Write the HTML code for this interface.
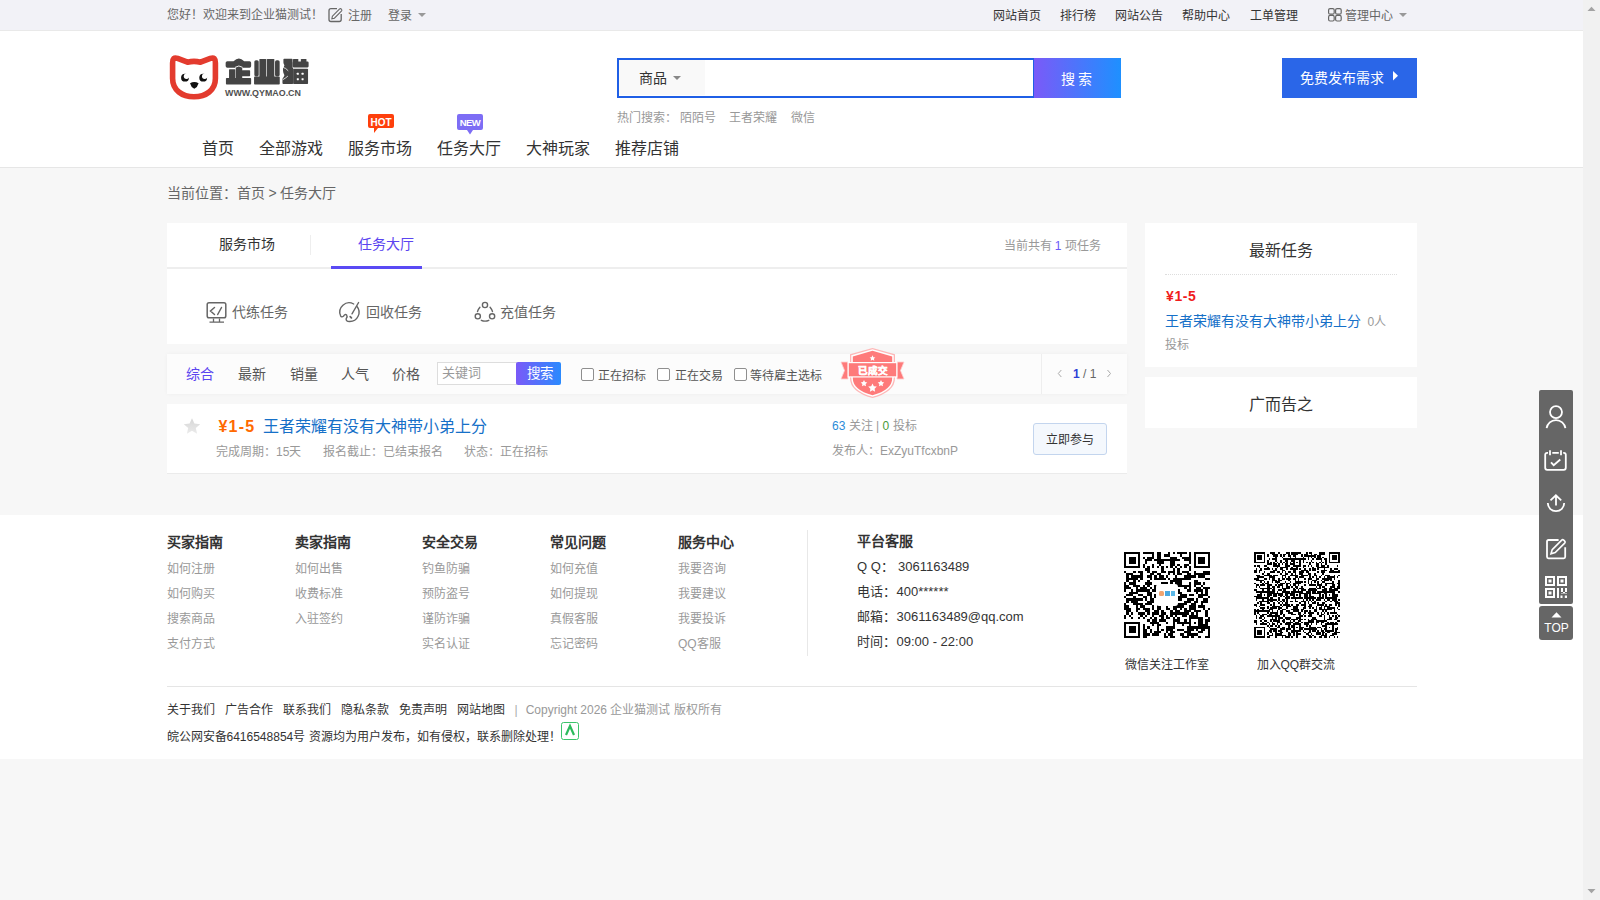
<!DOCTYPE html>
<html lang="zh-CN"><head><meta charset="utf-8"><title>任务大厅</title>
<style>
*{margin:0;padding:0;box-sizing:border-box}
html,body{width:1600px;height:900px;overflow:hidden}
body{position:relative;background:#f7f7f7;font-family:"Liberation Sans",sans-serif;color:#333}
.a{position:absolute;white-space:nowrap;line-height:20px}
.box{position:absolute}
svg{position:absolute;overflow:visible}
</style></head><body>
<div class="box" style="left:0;top:0;width:1583px;height:31px;background:#f2f2f7;border-bottom:1px solid #e9e9e9"></div>
<div class="a" style="left:166.5px;top:5px;font-size:12px;color:#666;">您好！欢迎来到企业猫测试！</div>
<svg style="left:325px;top:3px" width="20" height="22" viewBox="0 0 20 22" fill="none" stroke="#666" stroke-width="1.3"><path d="M12 5.7H6Q4 5.7 4 7.7V16.5Q4 18.5 6 18.5H14.2Q16.2 18.5 16.2 16.5V11"/><path d="M6.9 15.7L7.4 13.2L14.4 6.2Q15.4 5.2 16.4 6.2Q17.4 7.2 16.4 8.2L9.4 15.2Z" stroke-width="1.1"/></svg>
<div class="a" style="left:347.5px;top:5.5px;font-size:12px;color:#666;">注册</div>
<div class="a" style="left:388px;top:5.5px;font-size:12px;color:#666;">登录</div>
<svg style="left:418px;top:13px" width="8" height="4" viewBox="0 0 8 4"><path d="M0 0H8L4 4Z" fill="#999"/></svg>
<div class="a" style="left:993px;top:5.5px;font-size:12px;color:#333;">网站首页</div>
<div class="a" style="left:1060px;top:5.5px;font-size:12px;color:#333;">排行榜</div>
<div class="a" style="left:1115px;top:5.5px;font-size:12px;color:#333;">网站公告</div>
<div class="a" style="left:1182px;top:5.5px;font-size:12px;color:#333;">帮助中心</div>
<div class="a" style="left:1250px;top:5.5px;font-size:12px;color:#333;">工单管理</div>
<svg style="left:1324px;top:3px" width="22" height="22" viewBox="0 0 22 22" fill="none" stroke="#666" stroke-width="1.2"><rect x="4.6" y="5.6" width="5.6" height="5.6" rx="1.5"/><rect x="11.6" y="5.6" width="5.6" height="5.6" rx="1.5"/><rect x="4.6" y="12.4" width="5.6" height="5.6" rx="1.5"/><rect x="11.6" y="12.4" width="5.6" height="5.6" rx="1.5"/></svg>
<div class="a" style="left:1345px;top:5.5px;font-size:12px;color:#666;">管理中心</div>
<svg style="left:1399px;top:13px" width="8" height="4" viewBox="0 0 8 4"><path d="M0 0H8L4 4Z" fill="#999"/></svg>
<div class="box" style="left:0;top:31px;width:1583px;height:137px;background:#fff;border-bottom:1px solid #e6e6e6"></div>
<svg style="left:0;top:0" width="1" height="1" viewBox="0 0 1 1">
<path d="M172.6 63Q172.4 56.6 177.6 58.4L187.5 62.2Q194 60.6 200.5 62.2L210.4 58.4Q215.6 56.6 215.4 63V78.5C215.4 90 206 96.8 194 96.8C182 96.8 172.6 90 172.6 78.5Z" fill="none" stroke="#e33b2e" stroke-width="5.6" stroke-linejoin="round"/>
<circle cx="185" cy="77.7" r="3.9" fill="#111"/><circle cx="186.5" cy="76.2" r="2.7" fill="#fff"/>
<circle cx="203.2" cy="77.7" r="3.9" fill="#111"/><circle cx="204.7" cy="76.2" r="2.7" fill="#fff"/>
<path d="M190 83.3Q194.3 80.6 198.6 83.3Q197.6 87.3 194.3 88.8Q191 87.3 190 83.3Z" fill="#111"/>
<g transform="translate(222 54) scale(0.05624)" fill="#444">
<path d="M65 155Q65 128 95 128H205Q255 78 300 78Q345 78 395 128H490Q518 128 518 155V215Q518 243 490 243H95Q65 243 65 215Z"/>
<rect x="245" y="225" width="115" height="215" rx="10"/>
<rect x="125" y="272" width="112" height="170" rx="10"/>
<rect x="350" y="290" width="150" height="105" rx="12"/>
<rect x="70" y="425" width="448" height="117" rx="14"/>
<path d="M232 238Q300 188 368 238" fill="none" stroke="#fff" stroke-width="16"/>
<rect x="575" y="110" width="78" height="288" rx="30"/>
<rect x="665" y="88" width="122" height="335" rx="10"/>
<rect x="798" y="88" width="132" height="335" rx="10"/>
<rect x="943" y="110" width="82" height="288" rx="30"/>
<rect x="570" y="402" width="457" height="140" rx="14"/>
<path d="M1092 100Q1092 86 1106 86H1240Q1254 86 1254 100V240Q1268 250 1266 262V515Q1266 532 1250 532H1090Q1075 532 1075 515V440Q1100 410 1110 380Q1085 330 1085 300V250Q1100 235 1110 200Q1092 170 1092 150Z"/>
<path d="M1082 238Q1135 245 1178 300M1080 458Q1130 430 1172 392" fill="none" stroke="#fff" stroke-width="14"/>
<rect x="1262" y="88" width="95" height="60" rx="10"/>
<rect x="1402" y="88" width="100" height="60" rx="10"/>
<rect x="1255" y="135" width="285" height="105" rx="20"/>
<rect x="1265" y="262" width="265" height="270" rx="12"/>
<g fill="#fff"><rect x="1330" y="335" width="36" height="36" rx="6"/><rect x="1415" y="335" width="36" height="36" rx="6"/><rect x="1330" y="430" width="36" height="36" rx="6"/><rect x="1415" y="430" width="36" height="36" rx="6"/></g>
</g>
</svg>
<div class="a" style="left:225px;top:86px;font-size:8.9px;line-height:14px;font-weight:bold;color:#505050;letter-spacing:0px">WWW.QYMAO.CN</div>
<div class="box" style="left:617px;top:58px;width:418px;height:40px;border:2px solid #1f5fe6;background:#fff"></div>
<div class="box" style="left:619px;top:60px;width:86px;height:35px;background:#f9f9f9"></div>
<div class="a" style="left:638.5px;top:68px;font-size:14px;color:#333;">商品</div>
<svg style="left:673px;top:76px" width="8" height="4" viewBox="0 0 8 4"><path d="M0 0H8L4 4Z" fill="#888"/></svg>
<div class="box" style="left:1034px;top:58px;width:87px;height:40px;background:linear-gradient(90deg,#7a5af8,#1e90ff)"></div>
<div class="a" style="left:1060.5px;top:69px;font-size:14px;color:#fff;">搜&nbsp;索</div>
<div class="a" style="left:617px;top:107.5px;font-size:12px;color:#999;">热门搜索：</div>
<div class="a" style="left:680px;top:107.5px;font-size:12px;color:#999;">陌陌号</div>
<div class="a" style="left:729px;top:107.5px;font-size:12px;color:#999;">王者荣耀</div>
<div class="a" style="left:791px;top:107.5px;font-size:12px;color:#999;">微信</div>
<div class="box" style="left:1282px;top:58px;width:135px;height:40px;background:#2a66e8"></div>
<div class="a" style="left:1299.5px;top:68px;font-size:14px;color:#fff;">免费发布需求</div>
<svg style="left:1393px;top:71px" width="6" height="10" viewBox="0 0 6 10"><path d="M0 0L5 4.75L0 9.5Z" fill="#fff"/></svg>
<div class="a" style="left:201.5px;top:139px;font-size:16px;color:#333;">首页</div>
<div class="a" style="left:258.5px;top:139px;font-size:16px;color:#333;">全部游戏</div>
<div class="a" style="left:347.5px;top:139px;font-size:16px;color:#333;">服务市场</div>
<div class="a" style="left:436.5px;top:139px;font-size:16px;color:#333;">任务大厅</div>
<div class="a" style="left:525.5px;top:139px;font-size:16px;color:#333;">大神玩家</div>
<div class="a" style="left:614.5px;top:139px;font-size:16px;color:#333;">推荐店铺</div>
<svg style="left:368px;top:114px" width="26" height="20" viewBox="0 0 26 20"><path d="M2 0H24Q26 0 26 2V12Q26 14 24 14H10L6 19L6 14H2Q0 14 0 12V2Q0 0 2 0Z" fill="#fe3f0c"/></svg>
<div class="a" style="left:368px;top:115.5px;width:26px;text-align:center;font-size:10px;line-height:14px;font-weight:bold;color:#fff">HOT</div>
<svg style="left:457px;top:114px" width="26" height="21" viewBox="0 0 26 21"><path d="M2 0H24Q26 0 26 2V14Q26 16 24 16H16L13 20.5L10 16H2Q0 16 0 14V2Q0 0 2 0Z" fill="#7d6df5"/></svg>
<div class="a" style="left:457px;top:116px;width:26px;text-align:center;font-size:9.5px;line-height:14px;font-weight:bold;color:#fff;letter-spacing:-0.5px">NEW</div>
<div class="a" style="left:166.5px;top:183px;font-size:14px;color:#666;">当前位置：首页 &gt; 任务大厅</div>
<div class="box" style="left:167px;top:223px;width:960px;height:121px;background:#fff"></div>
<div class="box" style="left:167px;top:267px;width:960px;height:2px;background:#eee"></div>
<div class="a" style="left:219px;top:234px;font-size:14px;color:#333;">服务市场</div>
<div class="box" style="left:310px;top:235px;width:1px;height:20px;background:#eee"></div>
<div class="a" style="left:357.5px;top:234px;font-size:14px;color:#5b45f0;">任务大厅</div>
<div class="box" style="left:331px;top:266px;width:91px;height:3px;background:#5a4af4"></div>
<div class="a" style="left:1003.5px;top:235.5px;font-size:12px;color:#999">当前共有 <span style="color:#6a5af9">1</span> 项任务</div>
<svg style="left:202px;top:298px" width="30" height="28" viewBox="0 0 30 28" fill="none" stroke="#666" stroke-width="1.5"><rect x="5.2" y="4.8" width="18.6" height="15" rx="1.8"/><path d="M11.5 20.6V24M17.5 20.6V24M7.5 24.2H22" stroke-width="1.3"/><path d="M12.5 9.5L8.5 13L12.5 16.5M19.5 9.5L15.7 16.5" stroke-linecap="round"/></svg>
<div class="a" style="left:231.5px;top:302px;font-size:14px;color:#666;">代练任务</div>
<svg style="left:335px;top:298px" width="30" height="28" viewBox="0 0 30 28" fill="none" stroke="#666" stroke-width="1.4" stroke-linecap="round"><path d="M18.7 6A9.3 9.3 0 0 0 5.6 17.8Q6.6 19.6 8.4 18.3Q10 15.6 11.6 17Q12.7 18.4 11.2 20.6Q10.6 23.4 14.5 23.5A9.3 9.3 0 0 0 21.8 8.2"/><path d="M23.6 4.5L17 15.8"/><path d="M15.2 18.6L16.4 19.8" stroke-width="1.8"/></svg>
<div class="a" style="left:365.5px;top:302px;font-size:14px;color:#666;">回收任务</div>
<svg style="left:470px;top:298px" width="30" height="28" viewBox="0 0 30 28" fill="none" stroke="#666" stroke-width="1.4" stroke-linecap="round"><circle cx="15" cy="7" r="2.6"/><circle cx="7.8" cy="18.3" r="2.6"/><circle cx="22.1" cy="18.3" r="2.6"/><path d="M9.9 9.2Q8 11.5 7.5 13.5M20.1 9.2Q22 11.5 22.5 13.5M11.3 22.3Q15 24 18.8 22.3"/></svg>
<div class="a" style="left:499.5px;top:302px;font-size:14px;color:#666;">充值任务</div>
<div class="box" style="left:167px;top:354px;width:960px;height:40px;background:#fcfcfc;box-shadow:0 0 4px rgba(0,0,0,0.04)"></div>
<div class="a" style="left:186px;top:364px;font-size:14px;color:#5b45f0;">综合</div>
<div class="a" style="left:238px;top:364px;font-size:14px;color:#555;">最新</div>
<div class="a" style="left:289.5px;top:364px;font-size:14px;color:#555;">销量</div>
<div class="a" style="left:340.5px;top:364px;font-size:14px;color:#555;">人气</div>
<div class="a" style="left:392px;top:364px;font-size:14px;color:#555;">价格</div>
<div class="box" style="left:437px;top:362px;width:80px;height:23px;border:1px solid #ddd;background:#fff"></div>
<div class="a" style="left:442px;top:363px;font-size:13px;color:#999;">关键词</div>
<div class="box" style="left:516px;top:362px;width:45px;height:23px;border-radius:2px;background:linear-gradient(90deg,#7a5af8,#2a8afe)"></div>
<div class="a" style="left:527px;top:364px;font-size:13.5px;color:#fff;">搜索</div>
<div class="box" style="left:581px;top:368px;width:13px;height:13px;border:1px solid #8f8f8f;border-radius:2px;background:#fff"></div>
<div class="a" style="left:598px;top:365.5px;font-size:12px;color:#555;">正在招标</div>
<div class="box" style="left:657px;top:368px;width:13px;height:13px;border:1px solid #8f8f8f;border-radius:2px;background:#fff"></div>
<div class="a" style="left:674.5px;top:365.5px;font-size:12px;color:#555;">正在交易</div>
<div class="box" style="left:734px;top:368px;width:13px;height:13px;border:1px solid #8f8f8f;border-radius:2px;background:#fff"></div>
<div class="a" style="left:750px;top:365.5px;font-size:12px;color:#555;">等待雇主选标</div>
<svg style="left:835px;top:340px" width="80" height="65" viewBox="0 0 80 65">
<g opacity="0.95">
<path d="M15 14.3L37.5 8L60 14.3V38Q60 52 37.5 58Q15 52 15 38Z" fill="#ffb3b3"/>
<path d="M16.3 15.3L37.5 9.3L58.7 15.3V38Q58.7 51 37.5 56.7Q16.3 51 16.3 38Z" fill="#fff"/>
<path d="M17.8 16.4L37.5 10.8L57.2 16.4V38Q57.2 50 37.5 55.3Q17.8 50 17.8 38Z" fill="#ff7474"/>
<path d="M6 22H13V39H6L9.5 30.5Z" fill="#ff7474" stroke="#ffd0d0" stroke-width="0.8"/>
<path d="M69 22H62V39H69L65.5 30.5Z" fill="#ff7474" stroke="#ffd0d0" stroke-width="0.8"/>
<rect x="12.6" y="22" width="49.8" height="15.5" fill="#fff"/>
<rect x="13.8" y="23.2" width="47.4" height="13.1" fill="#ff7474"/>
<text x="37.5" y="33.8" text-anchor="middle" font-family="Liberation Sans,sans-serif" font-weight="bold" font-size="9.5" fill="#fff" stroke="#fff" stroke-width="0.5">已成交</text>
<path d="M37.5 15.3l.9 1.9 2 .2-1.5 1.4.4 2-1.8-1-1.8 1 .4-2-1.5-1.4 2-.2z" fill="#fff"/>
<path d="M29 40l1 2.1 2.3.3-1.7 1.6.4 2.3-2-1.1-2 1.1.4-2.3-1.7-1.6 2.3-.3z" fill="#fff"/>
<path d="M46 40l1 2.1 2.3.3-1.7 1.6.4 2.3-2-1.1-2 1.1.4-2.3-1.7-1.6 2.3-.3z" fill="#fff"/>
<path d="M37.5 43.5l1.3 2.7 3 .4-2.2 2.1.5 3-2.6-1.4-2.6 1.4.5-3-2.2-2.1 3-.4z" fill="#fff"/>
</g></svg>
<div class="box" style="left:1041px;top:354px;width:1px;height:40px;background:#eee"></div>
<svg style="left:1057px;top:369px" width="6" height="10" viewBox="0 0 6 10"><path d="M4.3 1L1.3 4.5L4.3 8" fill="none" stroke="#aaa" stroke-width="1"/></svg>
<div class="a" style="left:1073px;top:364px;font-size:12px;color:#666"><b style="color:#2f3fd6">1</b> / 1</div>
<svg style="left:1105.5px;top:369px" width="6" height="10" viewBox="0 0 6 10"><path d="M1.5 1L4.5 4.5L1.5 8" fill="none" stroke="#aaa" stroke-width="1"/></svg>
<div class="box" style="left:167px;top:404px;width:960px;height:70px;background:#fff;border-bottom:1px solid #ebebeb"></div>
<svg style="left:182px;top:417px" width="20" height="19" viewBox="0 0 20 19"><defs><linearGradient id="sg" x1="0" y1="0" x2="0" y2="1"><stop offset="0" stop-color="#d6d6d6"/><stop offset="1" stop-color="#ebebeb"/></linearGradient></defs><path d="M10 1.3L12.4 6.6L18.2 7.2L13.8 11.1L15.1 16.8L10 13.8L4.9 16.8L6.2 11.1L1.8 7.2L7.6 6.6Z" fill="url(#sg)"/></svg>
<div class="a" style="left:218.5px;top:417px;font-size:16px;color:#ff6a00;font-weight:bold;letter-spacing:1.2px">¥1-5</div>
<div class="a" style="left:262.5px;top:417px;font-size:16px;color:#1670c8;">王者荣耀有没有大神带小弟上分</div>
<div class="a" style="left:216px;top:442px;font-size:12px;color:#999;">完成周期：15天</div>
<div class="a" style="left:322.5px;top:442px;font-size:12px;color:#999;">报名截止：已结束报名</div>
<div class="a" style="left:463.5px;top:442px;font-size:12px;color:#999;">状态：正在招标</div>
<div class="a" style="left:832px;top:416px;font-size:12px;color:#999"><span style="color:#2b8bd8">63</span> 关注 | <span style="color:#4a9a3a">0</span> 投标</div>
<div class="a" style="left:832px;top:441px;font-size:12px;color:#999;">发布人：ExZyuTfcxbnP</div>
<div class="box" style="left:1033px;top:423px;width:74px;height:32px;background:#f4f8fd;border:1px solid #c3d5ee;border-radius:3px"></div>
<div class="a" style="left:1045.5px;top:430px;font-size:12px;color:#333;">立即参与</div>
<div class="box" style="left:1145px;top:223px;width:272px;height:144px;background:#fff"></div>
<div class="a" style="left:1248.5px;top:241px;font-size:16px;color:#333;">最新任务</div>
<div class="box" style="left:1165px;top:274px;width:232px;height:0;border-top:1px dotted #ddd"></div>
<div class="a" style="left:1166px;top:286px;font-size:14px;color:#f01c1c;font-weight:bold;letter-spacing:0.6px">¥1-5</div>
<div class="a" style="left:1164.5px;top:311px;font-size:14px;color:#1670c8">王者荣耀有没有大神带小弟上分 <span style="font-size:12px;color:#999;margin-left:3px">0人</span></div>
<div class="a" style="left:1164.5px;top:335px;font-size:12px;color:#999;">投标</div>
<div class="box" style="left:1145px;top:377px;width:272px;height:51px;background:#fff"></div>
<div class="a" style="left:1248.5px;top:395px;font-size:16px;color:#333;">广而告之</div>
<div class="box" style="left:0;top:515px;width:1583px;height:244px;background:#fff"></div>
<div class="a" style="left:166.5px;top:531.5px;font-size:14px;color:#333;font-weight:bold">买家指南</div>
<div class="a" style="left:166.5px;top:558.5px;font-size:12px;color:#999;">如何注册</div>
<div class="a" style="left:166.5px;top:583.5px;font-size:12px;color:#999;">如何购买</div>
<div class="a" style="left:166.5px;top:608.5px;font-size:12px;color:#999;">搜索商品</div>
<div class="a" style="left:166.5px;top:633.5px;font-size:12px;color:#999;">支付方式</div>
<div class="a" style="left:294.5px;top:531.5px;font-size:14px;color:#333;font-weight:bold">卖家指南</div>
<div class="a" style="left:294.5px;top:558.5px;font-size:12px;color:#999;">如何出售</div>
<div class="a" style="left:294.5px;top:583.5px;font-size:12px;color:#999;">收费标准</div>
<div class="a" style="left:294.5px;top:608.5px;font-size:12px;color:#999;">入驻签约</div>
<div class="a" style="left:422px;top:531.5px;font-size:14px;color:#333;font-weight:bold">安全交易</div>
<div class="a" style="left:422px;top:558.5px;font-size:12px;color:#999;">钓鱼防骗</div>
<div class="a" style="left:422px;top:583.5px;font-size:12px;color:#999;">预防盗号</div>
<div class="a" style="left:422px;top:608.5px;font-size:12px;color:#999;">谨防诈骗</div>
<div class="a" style="left:422px;top:633.5px;font-size:12px;color:#999;">实名认证</div>
<div class="a" style="left:550px;top:531.5px;font-size:14px;color:#333;font-weight:bold">常见问题</div>
<div class="a" style="left:550px;top:558.5px;font-size:12px;color:#999;">如何充值</div>
<div class="a" style="left:550px;top:583.5px;font-size:12px;color:#999;">如何提现</div>
<div class="a" style="left:550px;top:608.5px;font-size:12px;color:#999;">真假客服</div>
<div class="a" style="left:550px;top:633.5px;font-size:12px;color:#999;">忘记密码</div>
<div class="a" style="left:678px;top:531.5px;font-size:14px;color:#333;font-weight:bold">服务中心</div>
<div class="a" style="left:678px;top:558.5px;font-size:12px;color:#999;">我要咨询</div>
<div class="a" style="left:678px;top:583.5px;font-size:12px;color:#999;">我要建议</div>
<div class="a" style="left:678px;top:608.5px;font-size:12px;color:#999;">我要投诉</div>
<div class="a" style="left:678px;top:633.5px;font-size:12px;color:#999;">QQ客服</div>
<div class="box" style="left:807px;top:530px;width:1px;height:126px;background:#e8e8e8"></div>
<div class="a" style="left:857px;top:531px;font-size:14px;color:#333;font-weight:bold">平台客服</div>
<div class="a" style="left:857px;top:557px;font-size:13px;color:#333;">Q Q：</div>
<div class="a" style="left:898px;top:557px;font-size:13px;color:#333;">3061163489</div>
<div class="a" style="left:857px;top:582px;font-size:13px;color:#333;">电话：</div>
<div class="a" style="left:896.5px;top:582px;font-size:13px;color:#333;">400******</div>
<div class="a" style="left:857px;top:607px;font-size:13px;color:#333;">邮箱：</div>
<div class="a" style="left:896.5px;top:607px;font-size:13px;color:#333;">3061163489@qq.com</div>
<div class="a" style="left:857px;top:632px;font-size:13px;color:#333;">时间：</div>
<div class="a" style="left:896.5px;top:632px;font-size:13px;color:#333;">09:00 - 22:00</div>
<svg style="left:1124px;top:552px" width="86" height="86" viewBox="0 0 37 37" shape-rendering="crispEdges"><path d="M0 0h7v1h-7zM8 0h5v1h-5zM14 0h2v1h-2zM19 0h1v1h-1zM21 0h1v1h-1zM23 0h4v1h-4zM28 0h1v1h-1zM30 0h7v1h-7zM0 1h1v1h-1zM6 1h1v1h-1zM12 1h1v1h-1zM14 1h2v1h-2zM17 1h3v1h-3zM24 1h1v1h-1zM28 1h1v1h-1zM30 1h1v1h-1zM36 1h1v1h-1zM0 2h1v1h-1zM2 2h3v1h-3zM6 2h1v1h-1zM8 2h1v1h-1zM10 2h3v1h-3zM14 2h2v1h-2zM20 2h3v1h-3zM25 2h4v1h-4zM30 2h1v1h-1zM32 2h3v1h-3zM36 2h1v1h-1zM0 3h1v1h-1zM2 3h3v1h-3zM6 3h1v1h-1zM9 3h3v1h-3zM13 3h11v1h-11zM26 3h3v1h-3zM30 3h1v1h-1zM32 3h3v1h-3zM36 3h1v1h-1zM0 4h1v1h-1zM2 4h3v1h-3zM6 4h1v1h-1zM9 4h1v1h-1zM14 4h3v1h-3zM20 4h2v1h-2zM28 4h1v1h-1zM30 4h1v1h-1zM32 4h3v1h-3zM36 4h1v1h-1zM0 5h1v1h-1zM6 5h1v1h-1zM8 5h1v1h-1zM12 5h1v1h-1zM15 5h1v1h-1zM20 5h2v1h-2zM23 5h1v1h-1zM26 5h2v1h-2zM30 5h1v1h-1zM36 5h1v1h-1zM0 6h7v1h-7zM8 6h1v1h-1zM10 6h1v1h-1zM12 6h1v1h-1zM14 6h1v1h-1zM16 6h1v1h-1zM18 6h1v1h-1zM20 6h1v1h-1zM22 6h1v1h-1zM24 6h1v1h-1zM26 6h1v1h-1zM28 6h1v1h-1zM30 6h7v1h-7zM9 7h2v1h-2zM16 7h1v1h-1zM21 7h1v1h-1zM23 7h1v1h-1zM28 7h1v1h-1zM0 8h1v1h-1zM4 8h1v1h-1zM6 8h2v1h-2zM10 8h1v1h-1zM12 8h2v1h-2zM16 8h2v1h-2zM19 8h3v1h-3zM23 8h1v1h-1zM25 8h3v1h-3zM30 8h1v1h-1zM34 8h3v1h-3zM1 9h3v1h-3zM7 9h1v1h-1zM11 9h2v1h-2zM14 9h2v1h-2zM19 9h1v1h-1zM21 9h1v1h-1zM23 9h2v1h-2zM27 9h2v1h-2zM30 9h7v1h-7zM1 10h1v1h-1zM3 10h5v1h-5zM10 10h2v1h-2zM13 10h1v1h-1zM15 10h2v1h-2zM18 10h1v1h-1zM22 10h1v1h-1zM26 10h5v1h-5zM32 10h3v1h-3zM1 11h5v1h-5zM7 11h1v1h-1zM11 11h1v1h-1zM13 11h5v1h-5zM19 11h1v1h-1zM21 11h8v1h-8zM35 11h2v1h-2zM1 12h1v1h-1zM4 12h1v1h-1zM6 12h1v1h-1zM10 12h1v1h-1zM20 12h5v1h-5zM30 12h2v1h-2zM0 13h1v1h-1zM2 13h3v1h-3zM9 13h3v1h-3zM16 13h3v1h-3zM20 13h1v1h-1zM22 13h3v1h-3zM28 13h1v1h-1zM30 13h3v1h-3zM34 13h1v1h-1zM0 14h2v1h-2zM4 14h3v1h-3zM8 14h1v1h-1zM10 14h1v1h-1zM13 14h1v1h-1zM23 14h6v1h-6zM30 14h1v1h-1zM33 14h1v1h-1zM0 15h3v1h-3zM5 15h1v1h-1zM7 15h3v1h-3zM11 15h1v1h-1zM13 15h1v1h-1zM26 15h1v1h-1zM28 15h1v1h-1zM31 15h2v1h-2zM34 15h3v1h-3zM0 16h1v1h-1zM3 16h1v1h-1zM5 16h6v1h-6zM12 16h2v1h-2zM23 16h1v1h-1zM27 16h2v1h-2zM30 16h4v1h-4zM35 16h1v1h-1zM2 17h4v1h-4zM10 17h2v1h-2zM23 17h2v1h-2zM31 17h1v1h-1zM33 17h1v1h-1zM35 17h1v1h-1zM1 18h3v1h-3zM6 18h2v1h-2zM10 18h2v1h-2zM13 18h1v1h-1zM24 18h3v1h-3zM28 18h2v1h-2zM32 18h4v1h-4zM0 19h1v1h-1zM4 19h1v1h-1zM8 19h2v1h-2zM11 19h1v1h-1zM13 19h1v1h-1zM23 19h4v1h-4zM32 19h2v1h-2zM36 19h1v1h-1zM1 20h7v1h-7zM9 20h1v1h-1zM11 20h2v1h-2zM23 20h2v1h-2zM27 20h3v1h-3zM31 20h1v1h-1zM34 20h2v1h-2zM1 21h1v1h-1zM3 21h3v1h-3zM10 21h3v1h-3zM26 21h3v1h-3zM30 21h2v1h-2zM33 21h3v1h-3zM0 22h1v1h-1zM4 22h4v1h-4zM9 22h3v1h-3zM23 22h4v1h-4zM29 22h2v1h-2zM33 22h1v1h-1zM0 23h2v1h-2zM5 23h1v1h-1zM7 23h2v1h-2zM12 23h1v1h-1zM14 23h2v1h-2zM18 23h1v1h-1zM21 23h5v1h-5zM28 23h3v1h-3zM32 23h3v1h-3zM0 24h3v1h-3zM5 24h2v1h-2zM8 24h3v1h-3zM12 24h1v1h-1zM14 24h2v1h-2zM18 24h2v1h-2zM21 24h2v1h-2zM24 24h1v1h-1zM26 24h1v1h-1zM28 24h3v1h-3zM34 24h1v1h-1zM36 24h1v1h-1zM1 25h2v1h-2zM5 25h1v1h-1zM9 25h2v1h-2zM13 25h2v1h-2zM16 25h1v1h-1zM20 25h1v1h-1zM22 25h2v1h-2zM26 25h3v1h-3zM30 25h3v1h-3zM35 25h1v1h-1zM1 26h1v1h-1zM3 26h1v1h-1zM6 26h3v1h-3zM10 26h1v1h-1zM12 26h3v1h-3zM16 26h2v1h-2zM20 26h8v1h-8zM29 26h1v1h-1zM31 26h1v1h-1zM35 26h1v1h-1zM0 27h1v1h-1zM2 27h1v1h-1zM7 27h1v1h-1zM9 27h1v1h-1zM12 27h1v1h-1zM15 27h2v1h-2zM18 27h1v1h-1zM20 27h1v1h-1zM22 27h1v1h-1zM25 27h2v1h-2zM28 27h4v1h-4zM35 27h1v1h-1zM0 28h1v1h-1zM3 28h1v1h-1zM6 28h1v1h-1zM8 28h1v1h-1zM11 28h1v1h-1zM13 28h1v1h-1zM16 28h1v1h-1zM18 28h2v1h-2zM21 28h1v1h-1zM23 28h1v1h-1zM28 28h6v1h-6zM36 28h1v1h-1zM10 29h1v1h-1zM12 29h2v1h-2zM15 29h3v1h-3zM21 29h3v1h-3zM26 29h1v1h-1zM28 29h1v1h-1zM32 29h2v1h-2zM35 29h2v1h-2zM0 30h7v1h-7zM11 30h4v1h-4zM18 30h1v1h-1zM21 30h1v1h-1zM23 30h6v1h-6zM30 30h1v1h-1zM32 30h2v1h-2zM35 30h1v1h-1zM0 31h1v1h-1zM6 31h1v1h-1zM8 31h1v1h-1zM12 31h1v1h-1zM14 31h2v1h-2zM21 31h1v1h-1zM25 31h1v1h-1zM28 31h1v1h-1zM32 31h4v1h-4zM0 32h1v1h-1zM2 32h3v1h-3zM6 32h1v1h-1zM8 32h1v1h-1zM10 32h1v1h-1zM14 32h1v1h-1zM18 32h4v1h-4zM27 32h10v1h-10zM0 33h1v1h-1zM2 33h3v1h-3zM6 33h1v1h-1zM8 33h2v1h-2zM11 33h1v1h-1zM14 33h1v1h-1zM16 33h1v1h-1zM18 33h3v1h-3zM23 33h3v1h-3zM27 33h3v1h-3zM31 33h1v1h-1zM33 33h2v1h-2zM36 33h1v1h-1zM0 34h1v1h-1zM2 34h3v1h-3zM6 34h1v1h-1zM8 34h2v1h-2zM11 34h1v1h-1zM13 34h3v1h-3zM18 34h1v1h-1zM20 34h2v1h-2zM26 34h3v1h-3zM32 34h2v1h-2zM36 34h1v1h-1zM0 35h1v1h-1zM6 35h1v1h-1zM8 35h3v1h-3zM12 35h3v1h-3zM17 35h1v1h-1zM19 35h2v1h-2zM24 35h2v1h-2zM27 35h5v1h-5zM36 35h1v1h-1zM0 36h7v1h-7zM8 36h2v1h-2zM17 36h2v1h-2zM20 36h2v1h-2zM25 36h3v1h-3zM29 36h1v1h-1zM32 36h1v1h-1zM35 36h2v1h-2z" fill="#000"/></svg>
<div class="box" style="left:1156px;top:584px;width:22px;height:22px;background:#fff;border-radius:3px"></div>
<div class="box" style="left:1159px;top:591px;width:4.5px;height:5px;background:#f0a470;border-radius:1.5px"></div><div class="box" style="left:1165px;top:591px;width:4.5px;height:5px;background:#4aa8e0"></div><div class="box" style="left:1170.8px;top:591px;width:4.5px;height:5px;background:#5ab8e8"></div>
<svg style="left:1254px;top:552px" width="86" height="86" viewBox="0 0 53 53" shape-rendering="crispEdges"><path d="M0 0h7v1h-7zM10 0h3v1h-3zM15 0h1v1h-1zM20 0h2v1h-2zM23 0h6v1h-6zM32 0h1v1h-1zM34 0h2v1h-2zM40 0h4v1h-4zM46 0h7v1h-7zM0 1h1v1h-1zM6 1h1v1h-1zM8 1h1v1h-1zM11 1h4v1h-4zM16 1h1v1h-1zM18 1h2v1h-2zM21 1h1v1h-1zM23 1h4v1h-4zM29 1h1v1h-1zM31 1h2v1h-2zM35 1h1v1h-1zM37 1h2v1h-2zM40 1h4v1h-4zM46 1h1v1h-1zM52 1h1v1h-1zM0 2h1v1h-1zM2 2h3v1h-3zM6 2h1v1h-1zM8 2h1v1h-1zM12 2h3v1h-3zM16 2h1v1h-1zM18 2h1v1h-1zM21 2h2v1h-2zM24 2h2v1h-2zM29 2h1v1h-1zM31 2h7v1h-7zM39 2h2v1h-2zM46 2h1v1h-1zM48 2h3v1h-3zM52 2h1v1h-1zM0 3h1v1h-1zM2 3h3v1h-3zM6 3h1v1h-1zM13 3h1v1h-1zM17 3h1v1h-1zM22 3h1v1h-1zM25 3h1v1h-1zM30 3h1v1h-1zM33 3h1v1h-1zM35 3h1v1h-1zM37 3h1v1h-1zM39 3h2v1h-2zM42 3h1v1h-1zM46 3h1v1h-1zM48 3h3v1h-3zM52 3h1v1h-1zM0 4h1v1h-1zM2 4h3v1h-3zM6 4h1v1h-1zM9 4h1v1h-1zM11 4h3v1h-3zM18 4h14v1h-14zM33 4h1v1h-1zM36 4h1v1h-1zM38 4h4v1h-4zM43 4h2v1h-2zM46 4h1v1h-1zM48 4h3v1h-3zM52 4h1v1h-1zM0 5h1v1h-1zM6 5h1v1h-1zM8 5h1v1h-1zM13 5h1v1h-1zM16 5h1v1h-1zM19 5h2v1h-2zM23 5h2v1h-2zM28 5h1v1h-1zM30 5h1v1h-1zM35 5h1v1h-1zM41 5h1v1h-1zM44 5h1v1h-1zM46 5h1v1h-1zM52 5h1v1h-1zM0 6h7v1h-7zM8 6h1v1h-1zM10 6h1v1h-1zM12 6h1v1h-1zM14 6h1v1h-1zM16 6h1v1h-1zM18 6h1v1h-1zM20 6h1v1h-1zM22 6h1v1h-1zM24 6h1v1h-1zM26 6h1v1h-1zM28 6h1v1h-1zM30 6h1v1h-1zM32 6h1v1h-1zM34 6h1v1h-1zM36 6h1v1h-1zM38 6h1v1h-1zM40 6h1v1h-1zM42 6h1v1h-1zM44 6h1v1h-1zM46 6h7v1h-7zM8 7h3v1h-3zM12 7h2v1h-2zM15 7h1v1h-1zM17 7h1v1h-1zM19 7h2v1h-2zM22 7h3v1h-3zM28 7h1v1h-1zM34 7h1v1h-1zM38 7h2v1h-2zM41 7h1v1h-1zM44 7h1v1h-1zM0 8h1v1h-1zM2 8h2v1h-2zM6 8h2v1h-2zM12 8h4v1h-4zM19 8h3v1h-3zM24 8h5v1h-5zM30 8h2v1h-2zM33 8h1v1h-1zM35 8h1v1h-1zM38 8h2v1h-2zM41 8h3v1h-3zM45 8h1v1h-1zM51 8h1v1h-1zM3 9h1v1h-1zM8 9h1v1h-1zM14 9h1v1h-1zM16 9h5v1h-5zM23 9h1v1h-1zM26 9h1v1h-1zM30 9h1v1h-1zM36 9h1v1h-1zM39 9h7v1h-7zM1 10h1v1h-1zM4 10h1v1h-1zM6 10h4v1h-4zM11 10h1v1h-1zM13 10h1v1h-1zM16 10h2v1h-2zM20 10h1v1h-1zM22 10h5v1h-5zM28 10h1v1h-1zM31 10h1v1h-1zM34 10h1v1h-1zM36 10h2v1h-2zM39 10h1v1h-1zM43 10h1v1h-1zM47 10h1v1h-1zM49 10h3v1h-3zM0 11h2v1h-2zM3 11h2v1h-2zM12 11h2v1h-2zM17 11h2v1h-2zM24 11h2v1h-2zM29 11h4v1h-4zM34 11h1v1h-1zM36 11h2v1h-2zM41 11h4v1h-4zM47 11h2v1h-2zM52 11h1v1h-1zM0 12h2v1h-2zM3 12h1v1h-1zM6 12h1v1h-1zM10 12h3v1h-3zM14 12h2v1h-2zM17 12h1v1h-1zM19 12h1v1h-1zM21 12h2v1h-2zM24 12h2v1h-2zM28 12h3v1h-3zM32 12h2v1h-2zM39 12h1v1h-1zM41 12h3v1h-3zM46 12h7v1h-7zM5 13h1v1h-1zM8 13h2v1h-2zM16 13h1v1h-1zM19 13h2v1h-2zM23 13h1v1h-1zM25 13h1v1h-1zM28 13h2v1h-2zM33 13h2v1h-2zM37 13h1v1h-1zM42 13h1v1h-1zM1 14h3v1h-3zM6 14h5v1h-5zM12 14h3v1h-3zM17 14h3v1h-3zM22 14h5v1h-5zM29 14h4v1h-4zM34 14h1v1h-1zM37 14h2v1h-2zM41 14h1v1h-1zM44 14h3v1h-3zM49 14h1v1h-1zM52 14h1v1h-1zM2 15h4v1h-4zM9 15h4v1h-4zM17 15h1v1h-1zM19 15h1v1h-1zM21 15h1v1h-1zM25 15h2v1h-2zM28 15h3v1h-3zM34 15h1v1h-1zM36 15h1v1h-1zM38 15h1v1h-1zM40 15h1v1h-1zM43 15h1v1h-1zM45 15h5v1h-5zM51 15h1v1h-1zM0 16h3v1h-3zM6 16h2v1h-2zM9 16h1v1h-1zM11 16h2v1h-2zM15 16h1v1h-1zM17 16h2v1h-2zM20 16h3v1h-3zM24 16h2v1h-2zM27 16h1v1h-1zM31 16h1v1h-1zM33 16h3v1h-3zM38 16h2v1h-2zM42 16h6v1h-6zM49 16h1v1h-1zM1 17h5v1h-5zM11 17h3v1h-3zM15 17h2v1h-2zM21 17h1v1h-1zM25 17h1v1h-1zM27 17h1v1h-1zM33 17h1v1h-1zM36 17h3v1h-3zM41 17h1v1h-1zM43 17h3v1h-3zM47 17h1v1h-1zM52 17h1v1h-1zM4 18h1v1h-1zM6 18h1v1h-1zM8 18h1v1h-1zM11 18h1v1h-1zM13 18h3v1h-3zM19 18h1v1h-1zM22 18h1v1h-1zM25 18h5v1h-5zM31 18h1v1h-1zM33 18h1v1h-1zM35 18h1v1h-1zM37 18h1v1h-1zM39 18h1v1h-1zM42 18h2v1h-2zM48 18h1v1h-1zM52 18h1v1h-1zM0 19h1v1h-1zM5 19h1v1h-1zM7 19h2v1h-2zM14 19h1v1h-1zM16 19h3v1h-3zM20 19h2v1h-2zM24 19h5v1h-5zM33 19h1v1h-1zM35 19h1v1h-1zM39 19h1v1h-1zM41 19h1v1h-1zM44 19h5v1h-5zM51 19h2v1h-2zM1 20h2v1h-2zM4 20h3v1h-3zM8 20h3v1h-3zM13 20h1v1h-1zM15 20h3v1h-3zM20 20h1v1h-1zM22 20h1v1h-1zM24 20h2v1h-2zM27 20h1v1h-1zM31 20h1v1h-1zM34 20h4v1h-4zM39 20h3v1h-3zM44 20h1v1h-1zM48 20h2v1h-2zM52 20h1v1h-1zM1 21h1v1h-1zM3 21h1v1h-1zM8 21h2v1h-2zM11 21h2v1h-2zM14 21h2v1h-2zM17 21h1v1h-1zM20 21h2v1h-2zM23 21h1v1h-1zM25 21h2v1h-2zM29 21h1v1h-1zM38 21h1v1h-1zM40 21h1v1h-1zM42 21h2v1h-2zM47 21h3v1h-3zM51 21h2v1h-2zM4 22h7v1h-7zM12 22h1v1h-1zM17 22h5v1h-5zM24 22h1v1h-1zM26 22h1v1h-1zM28 22h3v1h-3zM34 22h4v1h-4zM39 22h2v1h-2zM43 22h2v1h-2zM46 22h2v1h-2zM49 22h4v1h-4zM0 23h2v1h-2zM5 23h1v1h-1zM8 23h2v1h-2zM11 23h2v1h-2zM15 23h2v1h-2zM18 23h2v1h-2zM24 23h2v1h-2zM27 23h1v1h-1zM29 23h3v1h-3zM33 23h6v1h-6zM42 23h3v1h-3zM46 23h6v1h-6zM1 24h12v1h-12zM14 24h1v1h-1zM17 24h5v1h-5zM23 24h7v1h-7zM32 24h3v1h-3zM36 24h2v1h-2zM39 24h11v1h-11zM52 24h1v1h-1zM4 25h1v1h-1zM8 25h10v1h-10zM19 25h6v1h-6zM28 25h7v1h-7zM36 25h5v1h-5zM43 25h2v1h-2zM48 25h2v1h-2zM2 26h3v1h-3zM6 26h1v1h-1zM8 26h3v1h-3zM12 26h2v1h-2zM15 26h3v1h-3zM19 26h2v1h-2zM22 26h3v1h-3zM26 26h1v1h-1zM28 26h1v1h-1zM31 26h2v1h-2zM34 26h1v1h-1zM40 26h1v1h-1zM42 26h1v1h-1zM44 26h1v1h-1zM46 26h1v1h-1zM48 26h4v1h-4zM0 27h5v1h-5zM8 27h2v1h-2zM12 27h2v1h-2zM16 27h1v1h-1zM18 27h1v1h-1zM20 27h2v1h-2zM24 27h1v1h-1zM28 27h1v1h-1zM31 27h2v1h-2zM34 27h3v1h-3zM40 27h1v1h-1zM42 27h1v1h-1zM44 27h1v1h-1zM48 27h4v1h-4zM1 28h8v1h-8zM10 28h2v1h-2zM15 28h1v1h-1zM19 28h3v1h-3zM23 28h7v1h-7zM31 28h7v1h-7zM39 28h4v1h-4zM44 28h7v1h-7zM1 29h1v1h-1zM5 29h1v1h-1zM8 29h6v1h-6zM15 29h1v1h-1zM17 29h2v1h-2zM20 29h1v1h-1zM25 29h1v1h-1zM30 29h1v1h-1zM32 29h1v1h-1zM34 29h1v1h-1zM36 29h1v1h-1zM38 29h3v1h-3zM43 29h1v1h-1zM45 29h2v1h-2zM48 29h3v1h-3zM52 29h1v1h-1zM3 30h6v1h-6zM10 30h2v1h-2zM14 30h1v1h-1zM16 30h1v1h-1zM18 30h1v1h-1zM20 30h1v1h-1zM22 30h2v1h-2zM25 30h2v1h-2zM29 30h3v1h-3zM33 30h1v1h-1zM35 30h1v1h-1zM37 30h1v1h-1zM44 30h1v1h-1zM47 30h1v1h-1zM49 30h3v1h-3zM2 31h1v1h-1zM4 31h1v1h-1zM8 31h2v1h-2zM12 31h1v1h-1zM15 31h1v1h-1zM17 31h1v1h-1zM19 31h2v1h-2zM28 31h1v1h-1zM31 31h1v1h-1zM33 31h1v1h-1zM36 31h2v1h-2zM39 31h1v1h-1zM42 31h2v1h-2zM50 31h3v1h-3zM0 32h2v1h-2zM4 32h3v1h-3zM10 32h1v1h-1zM12 32h1v1h-1zM16 32h1v1h-1zM18 32h4v1h-4zM23 32h1v1h-1zM26 32h2v1h-2zM29 32h3v1h-3zM34 32h2v1h-2zM39 32h4v1h-4zM44 32h1v1h-1zM46 32h2v1h-2zM50 32h1v1h-1zM52 32h1v1h-1zM1 33h1v1h-1zM3 33h1v1h-1zM8 33h1v1h-1zM11 33h5v1h-5zM17 33h1v1h-1zM20 33h3v1h-3zM24 33h3v1h-3zM31 33h1v1h-1zM33 33h3v1h-3zM38 33h1v1h-1zM41 33h1v1h-1zM43 33h4v1h-4zM52 33h1v1h-1zM4 34h3v1h-3zM8 34h1v1h-1zM10 34h4v1h-4zM15 34h2v1h-2zM20 34h1v1h-1zM24 34h3v1h-3zM30 34h2v1h-2zM34 34h1v1h-1zM36 34h1v1h-1zM38 34h1v1h-1zM40 34h2v1h-2zM43 34h1v1h-1zM45 34h5v1h-5zM51 34h1v1h-1zM0 35h1v1h-1zM2 35h1v1h-1zM5 35h1v1h-1zM9 35h3v1h-3zM15 35h1v1h-1zM17 35h3v1h-3zM23 35h5v1h-5zM29 35h2v1h-2zM37 35h2v1h-2zM40 35h8v1h-8zM49 35h1v1h-1zM52 35h1v1h-1zM0 36h10v1h-10zM11 36h1v1h-1zM14 36h1v1h-1zM16 36h2v1h-2zM20 36h2v1h-2zM24 36h4v1h-4zM29 36h1v1h-1zM31 36h2v1h-2zM34 36h1v1h-1zM37 36h2v1h-2zM42 36h1v1h-1zM44 36h1v1h-1zM49 36h1v1h-1zM0 37h1v1h-1zM2 37h1v1h-1zM8 37h1v1h-1zM10 37h5v1h-5zM16 37h2v1h-2zM21 37h3v1h-3zM27 37h2v1h-2zM31 37h1v1h-1zM33 37h4v1h-4zM39 37h1v1h-1zM41 37h1v1h-1zM43 37h1v1h-1zM45 37h1v1h-1zM47 37h4v1h-4zM0 38h1v1h-1zM3 38h1v1h-1zM5 38h3v1h-3zM9 38h2v1h-2zM13 38h2v1h-2zM16 38h1v1h-1zM18 38h1v1h-1zM23 38h3v1h-3zM27 38h2v1h-2zM30 38h1v1h-1zM34 38h2v1h-2zM39 38h1v1h-1zM41 38h2v1h-2zM45 38h1v1h-1zM51 38h1v1h-1zM1 39h1v1h-1zM4 39h2v1h-2zM8 39h8v1h-8zM18 39h1v1h-1zM28 39h2v1h-2zM31 39h1v1h-1zM33 39h3v1h-3zM40 39h2v1h-2zM43 39h1v1h-1zM46 39h1v1h-1zM48 39h1v1h-1zM50 39h1v1h-1zM52 39h1v1h-1zM1 40h1v1h-1zM3 40h2v1h-2zM6 40h1v1h-1zM11 40h1v1h-1zM13 40h1v1h-1zM15 40h3v1h-3zM19 40h4v1h-4zM26 40h3v1h-3zM36 40h2v1h-2zM43 40h1v1h-1zM46 40h2v1h-2zM50 40h2v1h-2zM5 41h1v1h-1zM10 41h4v1h-4zM15 41h1v1h-1zM18 41h1v1h-1zM20 41h2v1h-2zM23 41h4v1h-4zM28 41h2v1h-2zM31 41h1v1h-1zM33 41h1v1h-1zM35 41h4v1h-4zM43 41h1v1h-1zM45 41h3v1h-3zM49 41h2v1h-2zM0 42h2v1h-2zM4 42h1v1h-1zM6 42h2v1h-2zM10 42h1v1h-1zM12 42h4v1h-4zM17 42h2v1h-2zM22 42h1v1h-1zM24 42h1v1h-1zM27 42h2v1h-2zM33 42h4v1h-4zM38 42h7v1h-7zM51 42h2v1h-2zM0 43h2v1h-2zM5 43h1v1h-1zM8 43h1v1h-1zM11 43h1v1h-1zM14 43h2v1h-2zM18 43h1v1h-1zM20 43h4v1h-4zM25 43h3v1h-3zM29 43h1v1h-1zM31 43h6v1h-6zM38 43h2v1h-2zM41 43h2v1h-2zM45 43h1v1h-1zM47 43h2v1h-2zM50 43h1v1h-1zM1 44h1v1h-1zM4 44h4v1h-4zM9 44h1v1h-1zM11 44h2v1h-2zM14 44h1v1h-1zM16 44h1v1h-1zM19 44h4v1h-4zM24 44h5v1h-5zM31 44h3v1h-3zM35 44h1v1h-1zM38 44h1v1h-1zM41 44h1v1h-1zM44 44h8v1h-8zM8 45h1v1h-1zM10 45h2v1h-2zM13 45h1v1h-1zM15 45h1v1h-1zM21 45h1v1h-1zM23 45h2v1h-2zM28 45h1v1h-1zM32 45h1v1h-1zM34 45h1v1h-1zM42 45h3v1h-3zM48 45h1v1h-1zM0 46h7v1h-7zM9 46h1v1h-1zM14 46h2v1h-2zM17 46h2v1h-2zM21 46h1v1h-1zM23 46h2v1h-2zM26 46h1v1h-1zM28 46h3v1h-3zM34 46h4v1h-4zM39 46h2v1h-2zM44 46h1v1h-1zM46 46h1v1h-1zM48 46h1v1h-1zM51 46h1v1h-1zM0 47h1v1h-1zM6 47h1v1h-1zM10 47h4v1h-4zM16 47h3v1h-3zM20 47h3v1h-3zM24 47h1v1h-1zM28 47h2v1h-2zM31 47h8v1h-8zM41 47h1v1h-1zM43 47h2v1h-2zM48 47h1v1h-1zM50 47h2v1h-2zM0 48h1v1h-1zM2 48h3v1h-3zM6 48h1v1h-1zM9 48h2v1h-2zM12 48h2v1h-2zM15 48h2v1h-2zM20 48h1v1h-1zM23 48h6v1h-6zM30 48h1v1h-1zM34 48h1v1h-1zM36 48h2v1h-2zM39 48h1v1h-1zM41 48h2v1h-2zM44 48h5v1h-5zM50 48h1v1h-1zM0 49h1v1h-1zM2 49h3v1h-3zM6 49h1v1h-1zM8 49h1v1h-1zM10 49h1v1h-1zM13 49h1v1h-1zM16 49h2v1h-2zM21 49h1v1h-1zM23 49h2v1h-2zM26 49h1v1h-1zM31 49h1v1h-1zM33 49h2v1h-2zM38 49h3v1h-3zM42 49h2v1h-2zM45 49h2v1h-2zM49 49h4v1h-4zM0 50h1v1h-1zM2 50h3v1h-3zM6 50h1v1h-1zM8 50h1v1h-1zM11 50h1v1h-1zM13 50h4v1h-4zM21 50h2v1h-2zM24 50h1v1h-1zM26 50h3v1h-3zM32 50h2v1h-2zM35 50h1v1h-1zM38 50h3v1h-3zM42 50h1v1h-1zM44 50h1v1h-1zM48 50h3v1h-3zM0 51h1v1h-1zM6 51h1v1h-1zM9 51h3v1h-3zM13 51h7v1h-7zM21 51h2v1h-2zM24 51h1v1h-1zM26 51h1v1h-1zM33 51h2v1h-2zM36 51h1v1h-1zM41 51h4v1h-4zM47 51h2v1h-2zM0 52h7v1h-7zM8 52h2v1h-2zM13 52h1v1h-1zM17 52h1v1h-1zM19 52h3v1h-3zM23 52h1v1h-1zM26 52h1v1h-1zM30 52h2v1h-2zM34 52h2v1h-2zM37 52h1v1h-1zM40 52h2v1h-2zM43 52h2v1h-2zM46 52h1v1h-1zM49 52h1v1h-1zM51 52h1v1h-1z" fill="#000"/></svg>
<div class="a" style="left:1124.5px;top:655px;font-size:12px;color:#333;">微信关注工作室</div>
<div class="a" style="left:1256.5px;top:655px;font-size:12px;color:#333;">加入QQ群交流</div>
<div class="box" style="left:167px;top:686px;width:1250px;height:1px;background:#e5e5e5"></div>
<div class="a" style="left:166.5px;top:699.5px;font-size:12px;color:#333;word-spacing:0"><span style="margin-right:10px">关于我们</span><span style="margin-right:10px">广告合作</span><span style="margin-right:10px">联系我们</span><span style="margin-right:10px">隐私条款</span><span style="margin-right:10px">免责声明</span><span>网站地图</span><span style="color:#aaa;margin:0 8px 0 10px">|</span><span style="color:#999">Copyright 2026 企业猫测试 版权所有</span></div>
<div class="a" style="left:166.5px;top:726.5px;font-size:12px;color:#333;">皖公网安备6416548854号 资源均为用户发布，如有侵权，联系删除处理！</div>
<svg style="left:561px;top:722px" width="18" height="18" viewBox="0 0 18 18"><rect x="0.5" y="0.5" width="17" height="17" rx="2" fill="#fff" stroke="#3cc46b"/><path d="M5 13L9 4L13 13" fill="none" stroke="#2dbb5d" stroke-width="2.2" stroke-linejoin="miter"/></svg>
<div class="box" style="left:1539px;top:390px;width:34px;height:214px;background:#666;border-radius:2px"></div>
<div class="box" style="left:1539px;top:606px;width:34px;height:34px;background:#666;border-radius:3px"></div>
<svg style="left:1539px;top:390px" width="34" height="250" viewBox="0 0 34 250" fill="none" stroke="#fff" stroke-width="1.8">
<circle cx="17" cy="22.1" r="6"/>
<path d="M7.6 38.2A9.5 9.5 0 0 1 26.4 38.2"/>
<path d="M9 62.8H8.2Q6.2 62.8 6.2 64.8V77.8Q6.2 79.8 8.2 79.8H24.8Q26.8 79.8 26.8 77.8V64.8Q26.8 62.8 24.8 62.8H24.2M13.3 62.8H19.8M11 60.2V65.3M22 60.2V65.3"/>
<path d="M12 72.3L14.7 75.2L21.3 69.5"/>
<path d="M8.8 113A8.2 8.2 0 0 0 25.2 113"/>
<path d="M17 105.8V115.6M11.5 110.3L16.9 105.3L22.2 110.3"/>
<path d="M19.6 150H9.5Q8 150 8 151.5V166.8Q8 168.3 9.5 168.3H24.7Q26.2 168.3 26.2 166.8V157.2"/>
<path d="M12 163.8L13.2 159.6L22.7 150.1Q23.7 149.1 24.7 150.1L25.7 151.1Q26.7 152.1 25.7 153.1L16.2 162.6Z" stroke-width="1.6"/>
</svg>
<svg style="left:1545px;top:576px" width="22" height="22" viewBox="0 0 22 22" fill="#fff" fill-rule="evenodd">
<path d="M0 0H10V10H0ZM2 2V8H8V2Z M3.5 3.5H6.5V6.5H3.5Z"/>
<path d="M12 0H22V10H12ZM14 2V8H20V2Z M15.5 3.5H18.5V6.5H15.5Z"/>
<path d="M0 12H10V22H0ZM2 14V20H8V14Z M3.5 15.5H6.5V18.5H3.5Z"/>
<path d="M12 12H14V22H12Z M16 12H18V17H16Z M20 12H22V17H20Z M16 16H22V17.5H16Z M15.5 19.5H17.5V22H15.5Z M19.8 19.5H22V22H19.8Z"/>
</svg>
<svg style="left:1551px;top:611.5px" width="11" height="6" viewBox="0 0 11 6"><path d="M0.5 5.5L5.5 0.3L10.5 5.5Z" fill="#fff"/></svg>
<div class="a" style="left:1539.5px;top:619px;width:34px;text-align:center;font-size:12px;color:#fff;line-height:18px">TOP</div>
<div class="box" style="left:1583px;top:0;width:17px;height:900px;background:#f1f1f1"></div>
<svg style="left:1583px;top:0" width="17" height="900" viewBox="0 0 17 900"><path d="M4.5 11L8.5 6.8L12.5 11Z" fill="#a3a3a3"/><path d="M4.5 889L8.5 893.2L12.5 889Z" fill="#a3a3a3"/></svg>
</body></html>
